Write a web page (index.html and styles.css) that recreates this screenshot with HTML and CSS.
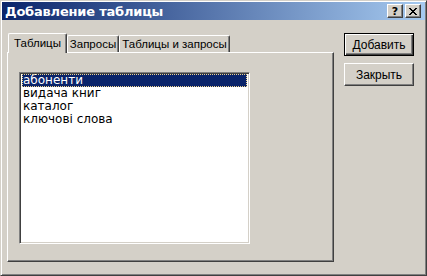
FILE: index.html
```html
<!DOCTYPE html>
<html lang="ru">
<head>
    <meta charset="UTF-8">
    <title>Добавление таблицы</title>
    <link rel="stylesheet" href="styles.css">
</head>
<body>
    <div class="window">
        <div class="titlebar">
            <span class="title">Добавление таблицы</span>
            <div class="caption-buttons">
                <button class="cap cap-help">?</button>
                <button class="cap cap-close">
                    <svg width="8" height="7" viewBox="0 0 8 7">
                        <path d="M0 0h2v1h-2zM6 0h2v1h-2zM1 1h2v1h-2zM5 1h2v1h-2zM2 2h4v1h-4zM3 3h2v1h-2zM2 4h4v1h-4zM1 5h2v1h-2zM5 5h2v1h-2zM0 6h2v1h-2zM6 6h2v1h-2z" fill="#000"/>
                    </svg>
                </button>
            </div>
        </div>

        <div class="client">
            <div class="tabs">
                <div class="tabstrip">
                    <div class="tab active tab-tables">Таблицы</div>
                    <div class="tab tab-queries">Запросы</div>
                    <div class="tab tab-both">Таблицы и запросы</div>
                </div>
                <div class="panel">
                    <div class="listbox">
                        <div class="item selected">абоненти</div>
                        <div class="item">видача книг</div>
                        <div class="item">каталог</div>
                        <div class="item">ключові слова</div>
                    </div>
                </div>
            </div>

            <div class="actions">
                <button class="btn btn-default">Добавить</button>
                <button class="btn">Закрыть</button>
            </div>
        </div>
    </div>
</body>
</html>
```

FILE: styles.css
```css
body {
    margin: 0;
    background: #d4d0c8;
    font-family: "Liberation Sans", Arial, sans-serif;
    font-size: 11px;
    color: #000;
}

.window {
    width: 427px;
    height: 276px;
    box-sizing: border-box;
    display: flex;
    flex-direction: column;
    border: 1px solid;
    border-color: #d4d0c8 #404040 #404040 #d4d0c8;
    box-shadow: inset 1px 1px #fff, inset -1px -1px #808080;
    padding: 1px 1px 2px 1px;
}

/* title bar */
.titlebar {
    height: 18px;
    display: flex;
    align-items: center;
    justify-content: space-between;
    background: linear-gradient(to right, #0a246a, #a6caf0);
    padding: 0 4px 0 3px;
}

.title {
    color: #fff;
    font-family: "DejaVu Sans", sans-serif;
    font-weight: bold;
    font-size: 13px;
    letter-spacing: -0.2px;
}

.caption-buttons {
    display: flex;
    gap: 2px;
}

.cap {
    width: 16px;
    height: 14px;
    padding: 0;
    display: flex;
    align-items: center;
    justify-content: center;
    background: #d4d0c8;
    border: 1px solid;
    border-color: #fff #404040 #404040 #fff;
    box-shadow: inset -1px -1px #808080;
    font-family: "DejaVu Sans", sans-serif;
    font-weight: bold;
    font-size: 11px;
    line-height: 1;
}

/* client area */
.client {
    flex: 1;
    display: flex;
    gap: 10px;
    padding: 13px 10px 11px 5px;
}

.tabs {
    width: 327px;
    display: flex;
    flex-direction: column;
}

.tabstrip {
    height: 19px;
    display: flex;
    align-items: flex-end;
    position: relative;
    z-index: 1;
}

.tab {
    height: 17px;
    box-sizing: border-box;
    text-align: center;
    line-height: 16px;
    font-size: 11.5px;
    border: 1px solid;
    border-bottom: none;
    border-color: #fff #404040 #fff #fff;
    box-shadow: inset -1px 0 #808080;
    border-radius: 2px 2px 0 0;
    white-space: nowrap;
}

.tab.active {
    height: 20px;
    margin: 0 0 -1px 1px;
    line-height: 19px;
    background: #d4d0c8;
}

.tab-tables {
    width: 59px;
}

.tab-queries {
    width: 52px;
}

.tab-both {
    width: 111px;
}

.panel {
    flex: 1;
    border: 1px solid;
    border-color: #fff #404040 #404040 #fff;
    box-shadow: inset -1px -1px #808080;
    padding: 19px 0 0 11px;
}

.listbox {
    width: 231px;
    height: 172px;
    box-sizing: border-box;
    background: #fff;
    border: 1px solid;
    border-color: #808080 #fff #fff #808080;
    box-shadow: inset 1px 1px #404040, inset -1px -1px #d4d0c8;
    padding: 1px 2px;
    font-family: "DejaVu Sans", sans-serif;
    font-size: 12px;
}

.item {
    height: 13px;
    line-height: 13px;
    padding-left: 1px;
    white-space: nowrap;
}

.item.selected {
    background: #0a246a;
    color: #fff;
    outline: 1px dotted #f0d48c;
    outline-offset: -1px;
}

/* buttons */
.actions {
    display: flex;
    flex-direction: column;
    gap: 7px;
}

.btn {
    width: 70px;
    height: 23px;
    padding: 0;
    background: #d4d0c8;
    font-family: "Liberation Sans", Arial, sans-serif;
    font-size: 12px;
    color: #000;
    border: 1px solid;
    border-color: #fff #404040 #404040 #fff;
    box-shadow: inset -1px -1px #808080;
}

.btn-default {
    border: 1px solid #000;
    box-shadow: inset 1px 1px #fff, inset -1px -1px #404040, inset -2px -2px #808080;
}
```
